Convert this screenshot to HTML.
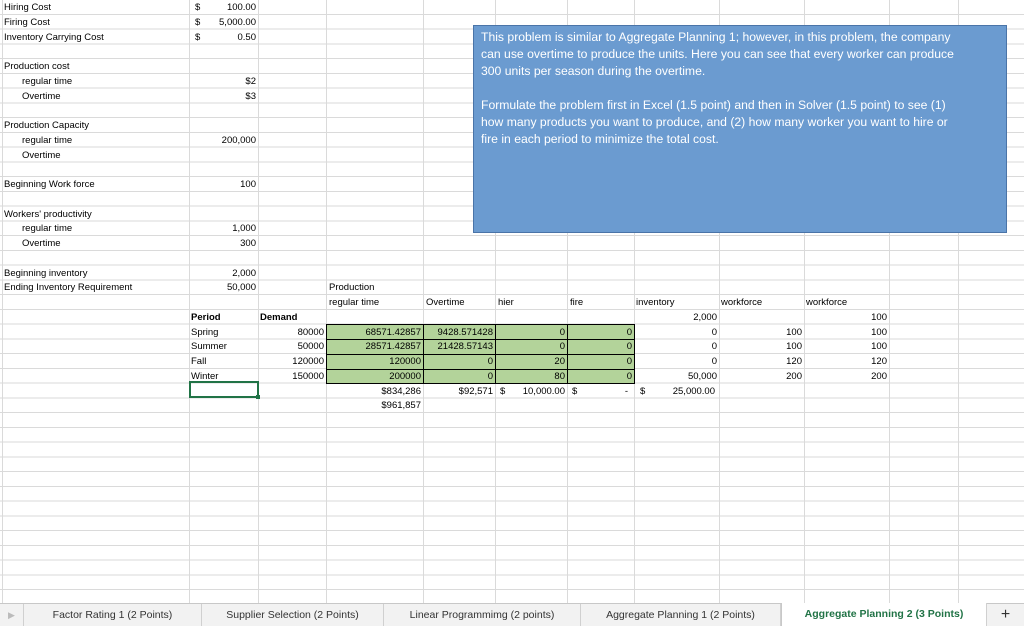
<!DOCTYPE html>
<html><head><meta charset="utf-8"><style>
*{margin:0;padding:0;box-sizing:border-box}
body{width:1024px;height:626px;overflow:hidden;background:#fff;font-family:"Liberation Sans",sans-serif;font-size:9.5px;color:#000;position:relative}
#grid{position:absolute;left:0;top:0;width:1024px;height:603px;background:repeating-linear-gradient(to bottom,transparent 0,transparent 13.75px,#dadada 13.75px,#dadada 14.75px)}
.v{position:absolute;top:0;height:603px;width:1px;background:#dadada}
.t{position:absolute;height:15px;line-height:15px;white-space:nowrap;overflow:visible}
.r{text-align:right}
.g{position:absolute;background:#b3d39a;border:1px solid #000}
#box{position:absolute;left:473px;top:25px;width:534px;height:208px;background:#6b9bd0;border:1px solid #4a74a8;color:#fff;font-size:12.2px;line-height:17px;padding:3px 0 0 7px;white-space:nowrap}
#tabs{position:absolute;left:0;top:603px;width:1024px;height:23px;background:#f2f2f2;border-top:1px solid #c8c8c8;font-size:10.5px;color:#333}
.tab{position:absolute;top:0;height:22px;line-height:22px;text-align:center;border-right:1px solid #d0d0d0}
</style></head><body>
<div id="grid"></div>
<div class="v" style="left:2px"></div>
<div class="v" style="left:189px"></div>
<div class="v" style="left:258px"></div>
<div class="v" style="left:326px"></div>
<div class="v" style="left:423px"></div>
<div class="v" style="left:495px"></div>
<div class="v" style="left:567px"></div>
<div class="v" style="left:634px"></div>
<div class="v" style="left:719px"></div>
<div class="v" style="left:804px"></div>
<div class="v" style="left:889px"></div>
<div class="v" style="left:958px"></div>

<div class="t" style="left:4px;top:0">Hiring Cost</div>
<div class="t" style="left:4px;top:14.75px">Firing Cost</div>
<div class="t" style="left:4px;top:29.5px">Inventory Carrying Cost</div>
<div class="t" style="left:4px;top:59px">Production cost</div>
<div class="t" style="left:22px;top:73.75px">regular time</div>
<div class="t" style="left:22px;top:88.5px">Overtime</div>
<div class="t" style="left:4px;top:118px">Production Capacity</div>
<div class="t" style="left:22px;top:132.75px">regular time</div>
<div class="t" style="left:22px;top:147.5px">Overtime</div>
<div class="t" style="left:4px;top:177px">Beginning Work force</div>
<div class="t" style="left:4px;top:206.5px">Workers' productivity</div>
<div class="t" style="left:22px;top:221.25px">regular time</div>
<div class="t" style="left:22px;top:236px">Overtime</div>
<div class="t" style="left:4px;top:265.5px">Beginning inventory</div>
<div class="t" style="left:4px;top:280.25px">Ending Inventory Requirement</div>

<div class="t" style="left:195px;top:0">$</div><div class="t r" style="left:190px;width:66px;top:0">100.00</div>
<div class="t" style="left:195px;top:14.75px">$</div><div class="t r" style="left:190px;width:66px;top:14.75px">5,000.00</div>
<div class="t" style="left:195px;top:29.5px">$</div><div class="t r" style="left:190px;width:66px;top:29.5px">0.50</div>
<div class="t r" style="left:190px;width:66px;top:73.75px">$2</div>
<div class="t r" style="left:190px;width:66px;top:88.5px">$3</div>
<div class="t r" style="left:190px;width:66px;top:132.75px">200,000</div>
<div class="t r" style="left:190px;width:66px;top:177px">100</div>
<div class="t r" style="left:190px;width:66px;top:221.25px">1,000</div>
<div class="t r" style="left:190px;width:66px;top:236px">300</div>
<div class="t r" style="left:190px;width:66px;top:265.5px">2,000</div>
<div class="t r" style="left:190px;width:66px;top:280.25px">50,000</div>

<div class="t" style="left:329px;top:280.25px">Production</div>
<div class="t" style="left:329px;top:295px">regular time</div>
<div class="t" style="left:426px;top:295px">Overtime</div>
<div class="t" style="left:498px;top:295px">hier</div>
<div class="t" style="left:570px;top:295px">fire</div>
<div class="t" style="left:636px;top:295px">inventory</div>
<div class="t" style="left:721px;top:295px">workforce</div>
<div class="t" style="left:806px;top:295px">workforce</div>
<div class="t" style="left:191px;top:309.75px;font-weight:bold">Period</div>
<div class="t" style="left:260px;top:309.75px;font-weight:bold">Demand</div>
<div class="t r" style="left:635px;width:82px;top:309.75px">2,000</div>
<div class="t r" style="left:805px;width:82px;top:309.75px">100</div>

<div class="g" style="left:326px;top:324px;width:98px;height:60px"></div>
<div class="g" style="left:423px;top:324px;width:73px;height:60px"></div>
<div class="g" style="left:495px;top:324px;width:73px;height:60px"></div>
<div class="g" style="left:567px;top:324px;width:68px;height:60px"></div>
<div style="position:absolute;left:326px;top:339px;width:309px;height:1px;background:#000"></div>
<div style="position:absolute;left:326px;top:354px;width:309px;height:1px;background:#000"></div>
<div style="position:absolute;left:326px;top:369px;width:309px;height:1px;background:#000"></div>
<div style="position:absolute;left:189px;top:381px;width:70px;height:17px;border:2px solid #217346"></div>
<div style="position:absolute;left:256px;top:395px;width:4px;height:4px;background:#217346"></div>

<div class="t" style="left:191px;top:324.5px">Spring</div>
<div class="t" style="left:191px;top:339.25px">Summer</div>
<div class="t" style="left:191px;top:354px">Fall</div>
<div class="t" style="left:191px;top:368.75px">Winter</div>
<div class="t r" style="left:260px;width:64px;top:324.5px">80000</div>
<div class="t r" style="left:260px;width:64px;top:339.25px">50000</div>
<div class="t r" style="left:260px;width:64px;top:354px">120000</div>
<div class="t r" style="left:260px;width:64px;top:368.75px">150000</div>

<div class="t r" style="left:327px;width:94px;top:324.5px">68571.42857</div>
<div class="t r" style="left:327px;width:94px;top:339.25px">28571.42857</div>
<div class="t r" style="left:327px;width:94px;top:354px">120000</div>
<div class="t r" style="left:327px;width:94px;top:368.75px">200000</div>
<div class="t r" style="left:424px;width:69px;top:324.5px">9428.571428</div>
<div class="t r" style="left:424px;width:69px;top:339.25px">21428.57143</div>
<div class="t r" style="left:424px;width:69px;top:354px">0</div>
<div class="t r" style="left:424px;width:69px;top:368.75px">0</div>
<div class="t r" style="left:496px;width:69px;top:324.5px">0</div>
<div class="t r" style="left:496px;width:69px;top:339.25px">0</div>
<div class="t r" style="left:496px;width:69px;top:354px">20</div>
<div class="t r" style="left:496px;width:69px;top:368.75px">80</div>
<div class="t r" style="left:568px;width:64px;top:324.5px">0</div>
<div class="t r" style="left:568px;width:64px;top:339.25px">0</div>
<div class="t r" style="left:568px;width:64px;top:354px">0</div>
<div class="t r" style="left:568px;width:64px;top:368.75px">0</div>

<div class="t r" style="left:635px;width:82px;top:324.5px">0</div>
<div class="t r" style="left:635px;width:82px;top:339.25px">0</div>
<div class="t r" style="left:635px;width:82px;top:354px">0</div>
<div class="t r" style="left:635px;width:82px;top:368.75px">50,000</div>
<div class="t r" style="left:720px;width:82px;top:324.5px">100</div>
<div class="t r" style="left:720px;width:82px;top:339.25px">100</div>
<div class="t r" style="left:720px;width:82px;top:354px">120</div>
<div class="t r" style="left:720px;width:82px;top:368.75px">200</div>
<div class="t r" style="left:805px;width:82px;top:324.5px">100</div>
<div class="t r" style="left:805px;width:82px;top:339.25px">100</div>
<div class="t r" style="left:805px;width:82px;top:354px">120</div>
<div class="t r" style="left:805px;width:82px;top:368.75px">200</div>

<div class="t r" style="left:327px;width:94px;top:383.5px">$834,286</div>
<div class="t r" style="left:424px;width:69px;top:383.5px">$92,571</div>
<div class="t" style="left:500px;top:383.5px">$</div><div class="t r" style="left:496px;width:69px;top:383.5px">10,000.00</div>
<div class="t" style="left:572px;top:383.5px">$</div><div class="t r" style="left:568px;width:60px;top:383.5px">-</div>
<div class="t" style="left:640px;top:383.5px">$</div><div class="t r" style="left:635px;width:80px;top:383.5px">25,000.00</div>
<div class="t r" style="left:327px;width:94px;top:398.25px">$961,857</div>

<div id="box">This problem is similar to Aggregate Planning 1; however, in this problem, the company<br>can use overtime to produce the units. Here you can see that every worker can produce<br>300 units per season during the overtime.<br><br>Formulate the problem first in Excel (1.5 point) and then in Solver (1.5 point) to see (1)<br>how many products you want to produce, and (2) how many worker you want to hire or<br>fire in each period to minimize the total cost.</div>

<div id="tabs">
<div class="tab" style="left:0;width:24px;color:#bbb;font-size:9px">&#9654;</div>
<div class="tab" style="left:24px;width:178px">Factor Rating 1 (2 Points)</div>
<div class="tab" style="left:202px;width:182px">Supplier Selection (2 Points)</div>
<div class="tab" style="left:384px;width:197px">Linear Programmimg (2 points)</div>
<div class="tab" style="left:581px;width:200px">Aggregate Planning 1 (2 Points)</div>
<div class="tab" style="left:781px;width:206px;background:#fff;color:#217346;font-weight:bold;height:23px;top:-1px;border-left:1px solid #c8c8c8">Aggregate Planning 2 (3 Points)</div>
<div class="tab" style="left:987px;width:37px;font-size:16px;border:none">+</div>
</div>
</body></html>
